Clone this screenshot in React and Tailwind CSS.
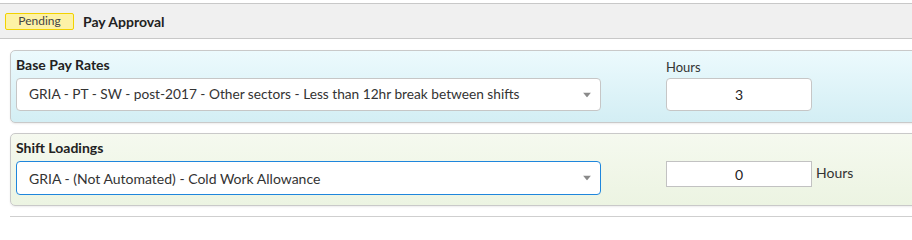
import React from "react";

const font = { fontFamily: "Lato, 'Liberation Sans', sans-serif" };

function Caret() {
  return (
    <svg width="8" height="5" viewBox="0 0 8 5" className="absolute right-[9px] top-1/2 -translate-y-1/2">
      <path d="M0 0 L8 0 L4 5 Z" fill="#8a8a8a" />
    </svg>
  );
}

export default function App() {
  return (
    <div className="w-[912px] h-[230px] overflow-hidden bg-white text-[#333]" style={font}>
      {/* header bar */}
      <div className="mt-[3px] h-[36px] w-[930px] border-t border-b border-[#c8c8c8] bg-[#f0f0f0] flex items-center pl-[5px]">
        <span className="w-[69px] h-[17px] flex items-center justify-center rounded-[2px] border border-[#f2d200] bg-[#fdf2a6] text-[12px] text-[#444] leading-none">
          Pending
        </span>
        <span className="ml-[9px] text-[14px] font-bold text-[#222]">Pay Approval</span>
      </div>

      {/* base pay rates */}
      <div className="mt-[11px] ml-[10px] w-[920px] h-[73px] rounded-l-[5px] border border-[#c9c9c9] bg-gradient-to-b from-[#ecfafd] to-[#d3eef4] shadow-[0_1px_2px_rgba(0,0,0,0.08)] flex pl-[5px]">
        <div className="w-[585px] flex flex-col">
          <div className="mt-[5px] text-[14px] font-bold text-[#222] leading-[18px]">Base Pay Rates</div>
          <div className="relative mt-[4px] h-[33px] rounded-[4px] border border-[#c6c6c6] bg-white flex items-center pl-[12px] text-[13.7px] text-[#333]">
            GRIA - PT - SW - post-2017 - Other sectors - Less than 12hr break between shifts
            <Caret />
          </div>
        </div>
        <div className="ml-[65px] flex flex-col">
          <div className="mt-[8px] text-[13px] text-[#333] leading-[16px]">Hours</div>
          <div className="mt-[3px] w-[146px] h-[33px] rounded-[4px] border border-[#c6c6c6] bg-white flex items-center justify-center text-[14px] text-[#222]">
            3
          </div>
        </div>
      </div>

      {/* shift loadings */}
      <div className="mt-[10px] ml-[10px] w-[920px] h-[73px] rounded-l-[5px] border border-[#c9c9c9] bg-gradient-to-b from-[#f5f9ef] to-[#ecf4e2] shadow-[0_1px_2px_rgba(0,0,0,0.08)] flex pl-[5px]">
        <div className="w-[585px] flex flex-col">
          <div className="mt-[5px] text-[14px] font-bold text-[#222] leading-[18px]">Shift Loadings</div>
          <div className="relative mt-[4px] h-[34px] rounded-[4px] border border-[#1f86dc] bg-white flex items-center pl-[12px] text-[14px] text-[#333]">
            GRIA - (Not Automated) - Cold Work Allowance
            <Caret />
          </div>
        </div>
        <div className="ml-[65px] mt-[27px] flex items-start">
          <div className="w-[146px] h-[26px] border border-[#c2c2c2] bg-white flex items-center justify-center text-[14px] text-[#222]">
            0
          </div>
          <span className="ml-[4px] mt-[4px] text-[14px] text-[#333] leading-[16px]">Hours</span>
        </div>
      </div>

      <div className="mt-[10px] ml-[10px] w-[920px] border-t border-[#cfcfcf]" />
    </div>
  );
}
